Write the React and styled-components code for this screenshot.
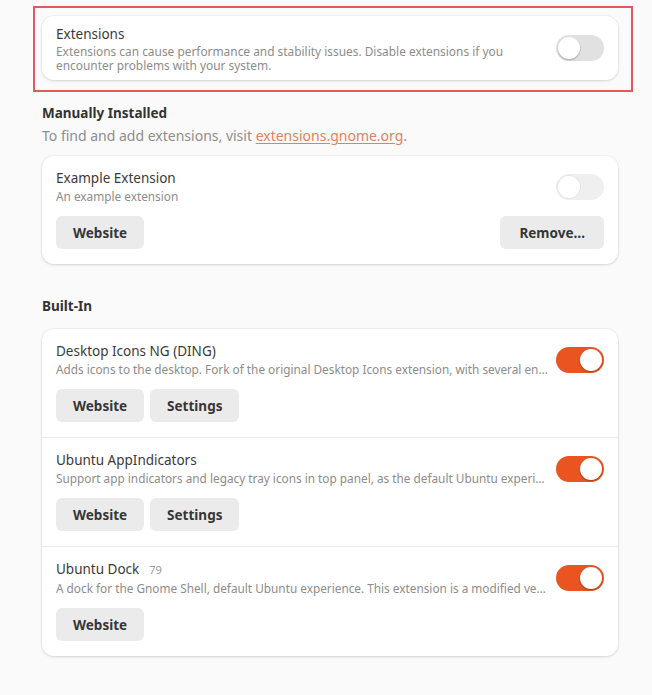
import React from "react";
import styled, { createGlobalStyle } from "styled-components";

const GlobalStyle = createGlobalStyle`
  html, body {
    margin: 0;
    padding: 0;
    background: #fafafa;
    font-family: "Noto Sans", "Open Sans", sans-serif;
    color: #333;
  }
`;

const Page = styled.div`
  width: 576px;
  margin-left: 42px;
  padding-bottom: 40px;
`;

const Highlight = styled.div`
  margin: 6px 0 0 -9px;
  width: 600px;
  height: 86px;
  box-sizing: border-box;
  border: 2px solid #df5a5a;
  padding: 8px 0 0 7px;
`;

const Card = styled.div`
  background: #fff;
  border-radius: 12px;
  box-shadow: 0 0 0 1px rgba(0, 0, 0, 0.03), 0 1px 3px rgba(0, 0, 0, 0.12);
  width: 576px;
  margin-top: ${(p) => p.$top || 0}px;
  overflow: hidden;
`;

const Row = styled.div`
  display: flex;
  align-items: center;
  gap: 12px;
  padding: 8px 14px;
  min-height: 48px;
`;

const ExtRow = styled.div`
  padding: 13px 14px 15px;
  border-top: ${(p) => (p.$first ? "none" : "1px solid #ebebeb")};
`;

const Text = styled.div`
  flex: 1;
  min-width: 0;
`;

const Title = styled.div`
  font-size: 13.5px;
  line-height: 18px;
  color: #3a3a3a;
  white-space: nowrap;
`;

const Version = styled.span`
  font-size: 11px;
  color: #999;
  margin-left: 10px;
`;

const Subtitle = styled.div`
  font-size: 11.8px;
  line-height: 15px;
  color: #8c8c8c;
  margin-top: 2px;
  white-space: nowrap;
  overflow: hidden;
  text-overflow: ellipsis;
`;

const Note = styled.div`
  font-size: 11.9px;
  line-height: 14px;
  color: #8c8c8c;
  margin-top: 1px;
  padding-right: 30px;
`;

const Switch = styled.div`
  flex: none;
  width: 48px;
  height: 26px;
  border-radius: 13px;
  box-sizing: border-box;
  padding: 2px;
  background: ${(p) => (p.$on ? "#e95420" : p.$dim ? "#efefef" : "#e1e1e1")};
  display: flex;
  justify-content: ${(p) => (p.$on ? "flex-end" : "flex-start")};
  align-self: center;
`;

const Knob = styled.div`
  width: 22px;
  height: 22px;
  border-radius: 50%;
  background: #fff;
  box-shadow: ${(p) =>
    p.$dim ? "0 0 0 1px rgba(0,0,0,0.04)" : "0 1px 2px rgba(0,0,0,0.3)"};
`;

const Buttons = styled.div`
  display: flex;
  gap: 6px;
  margin-top: 12px;
  justify-content: ${(p) => (p.$spread ? "space-between" : "flex-start")};
`;

const Button = styled.button`
  height: 33px;
  padding: 0 ${(p) => p.$px || 17}px;
  border: none;
  border-radius: 6px;
  background: #ebebeb;
  font-family: "Noto Sans", "Open Sans", sans-serif;
  font-weight: 700;
  font-size: 13.5px;
  color: #363636;
`;

const Heading = styled.div`
  font-size: 13.5px;
  font-weight: 700;
  line-height: 18px;
  color: #333;
  margin-top: ${(p) => p.$top}px;
`;

const Description = styled.div`
  font-size: 14px;
  line-height: 18px;
  color: #8e8e8e;
  margin-top: 5px;

  a {
    color: #e3805f;
    text-decoration: underline;
    text-underline-offset: 2px;
  }
`;

const ExtHead = styled.div`
  display: flex;
  align-items: center;
  gap: 7px;
`;

function Toggle({ on, dim }) {
  return (
    <Switch $on={on} $dim={dim}>
      <Knob $dim={dim} />
    </Switch>
  );
}

const builtIn = [
  {
    name: "Desktop Icons NG (DING)",
    desc: "Adds icons to the desktop. Fork of the original Desktop Icons extension, with several enhancements.",
    settings: true,
  },
  {
    name: "Ubuntu AppIndicators",
    desc: "Support app indicators and legacy tray icons in top panel, as the default Ubuntu experience.",
    settings: true,
  },
  {
    name: "Ubuntu Dock",
    version: "79",
    desc: "A dock for the Gnome Shell, default Ubuntu experience. This extension is a modified version of Dash to Dock.",
  },
];

export default function App() {
  return (
    <Page>
      <GlobalStyle />
      <Highlight>
        <Card>
          <Row>
            <Text>
              <Title>Extensions</Title>
              <Note>
                Extensions can cause performance and stability issues. Disable
                extensions if you encounter problems with your system.
              </Note>
            </Text>
            <Toggle />
          </Row>
        </Card>
      </Highlight>

      <Heading $top={12}>Manually Installed</Heading>
      <Description>
        To find and add extensions, visit <a>extensions.gnome.org</a>.
      </Description>
      <Card $top={11}>
        <ExtRow $first>
          <ExtHead>
            <Text>
              <Title>Example Extension</Title>
              <Subtitle>An example extension</Subtitle>
            </Text>
            <Toggle dim />
          </ExtHead>
          <Buttons $spread>
            <Button>Website</Button>
            <Button $px={19}>Remove…</Button>
          </Buttons>
        </ExtRow>
      </Card>

      <Heading $top={33}>Built-In</Heading>
      <Card $top={14}>
        {builtIn.map((ext, i) => (
          <ExtRow key={ext.name} $first={i === 0}>
            <ExtHead>
              <Text>
                <Title>
                  {ext.name}
                  {ext.version && <Version>{ext.version}</Version>}
                </Title>
                <Subtitle>{ext.desc}</Subtitle>
              </Text>
              <Toggle on />
            </ExtHead>
            <Buttons>
              <Button>Website</Button>
              {ext.settings && <Button>Settings</Button>}
            </Buttons>
          </ExtRow>
        ))}
      </Card>
    </Page>
  );
}
